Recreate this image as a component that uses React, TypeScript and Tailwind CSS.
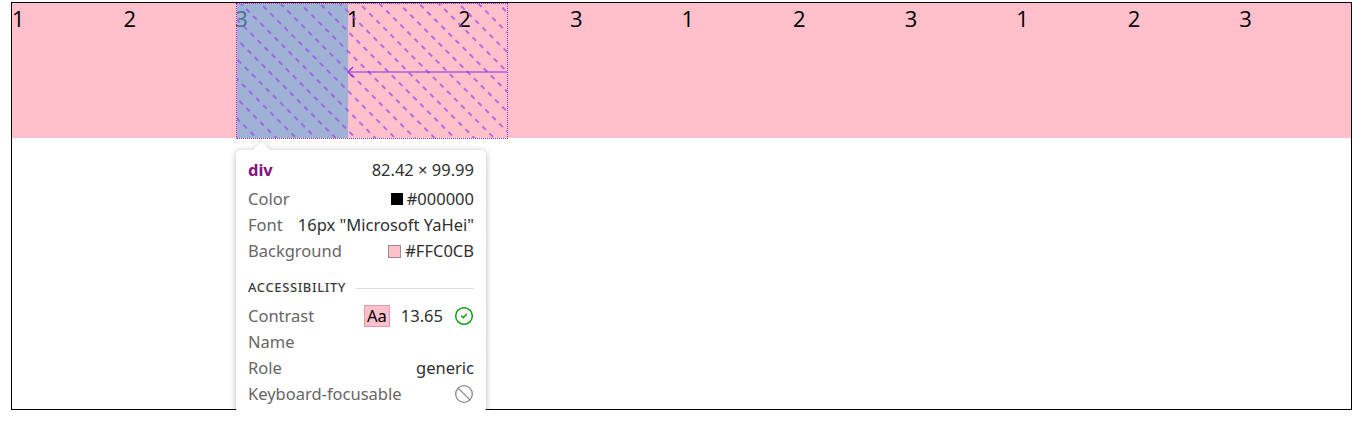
import { Ban, CircleCheck } from "lucide-react";

const cells = [1, 2, 3, 1, 2, 3, 1, 2, 3, 1, 2, 3];

function Row({ label, children }: { label: string; children?: React.ReactNode }) {
  return (
    <div className="flex h-[26px] items-center justify-between">
      <span className="text-[#666]">{label}</span>
      <span className="flex items-center text-[#303030]">{children}</span>
    </div>
  );
}

function Tooltip() {
  return (
    <div className="absolute left-[224px] top-[147px] w-[250px] rounded-[5px] bg-white px-[12px] pt-[7px] pb-[6px] text-[16.5px] shadow-[0_1px_6px_rgba(0,0,0,0.3)] font-['Noto_Sans',sans-serif]">
      <div className="absolute left-[19px] top-[-6px] h-[13px] w-[13px] rotate-45 bg-white shadow-[-2px_-2px_3px_rgba(0,0,0,0.08)]" />
      <div className="relative flex h-[26px] items-center justify-between">
        <span className="font-bold text-[#881280]">div</span>
        <span className="text-[#303030]">82.42 × 99.99</span>
      </div>
      <div className="mt-[3px]">
        <Row label="Color">
          <span className="mr-[4px] h-[12px] w-[12px] bg-black" />
          #000000
        </Row>
        <Row label="Font">16px "Microsoft YaHei"</Row>
        <Row label="Background">
          <span className="mr-[4px] h-[13px] w-[13px] border border-[#9a8a8c] bg-[#ffc0cb]" />
          #FFC0CB
        </Row>
      </div>
      <div className="mt-[14px] flex h-[20px] items-center gap-[10px]">
        <span className="text-[13px] font-medium tracking-[0.6px] text-[#3c3c3c]">ACCESSIBILITY</span>
        <span className="h-px flex-1 bg-[#dadce0]" />
      </div>
      <div className="mt-[5px]">
        <Row label="Contrast">
          <span className="flex h-[22px] w-[26px] items-center justify-center border border-[#e39aa6] bg-[#ffc0cb] text-black">
            Aa
          </span>
          <span className="ml-[11px]">13.65</span>
          <CircleCheck size={20} strokeWidth={1.8} className="ml-[11px] text-[#12a112]" />
        </Row>
        <Row label="Name" />
        <Row label="Role">generic</Row>
        <Row label="Keyboard-focusable">
          <Ban size={20} strokeWidth={1.6} className="text-[#8a8a8a]" />
        </Row>
      </div>
    </div>
  );
}

function Overlay() {
  return (
    <div className="absolute left-[224px] top-0 h-[136px] w-[272px] border-[1.5px] border-dotted border-[#8a2be2]">
      <div className="absolute left-0 top-0 h-full w-[111px] bg-[rgba(111,168,220,0.66)]" />
      <svg className="absolute inset-0 h-full w-full" xmlns="http://www.w3.org/2000/svg">
        <defs>
          <pattern
            id="hatch"
            width="14"
            height="10"
            patternUnits="userSpaceOnUse"
            patternTransform="rotate(-45)"
          >
            <line x1="3" y1="0" x2="3" y2="10" stroke="#9d4ee8" strokeWidth="1.5" strokeDasharray="5 5" />
          </pattern>
        </defs>
        <rect width="100%" height="100%" fill="url(#hatch)" />
        <line x1="111" y1="68" x2="270" y2="68" stroke="#8a2be2" strokeWidth="1.2" />
        <polyline points="116,63 111,68 116,73" fill="none" stroke="#8a2be2" strokeWidth="1.2" />
      </svg>
    </div>
  );
}

export default function App() {
  return (
    <div className="ml-[11px] mt-[2px] h-[408px] w-[1341px] border border-black bg-white">
      <div className="relative">
        <div className="flex h-[135px] bg-[#ffc0cb]">
          {cells.map((n, i) => (
            <div
              key={i}
              className="flex-1 text-[22px] leading-[30px] text-black font-['Open_Sans',sans-serif]"
            >
              {n}
            </div>
          ))}
        </div>
        <Overlay />
        <Tooltip />
      </div>
    </div>
  );
}
